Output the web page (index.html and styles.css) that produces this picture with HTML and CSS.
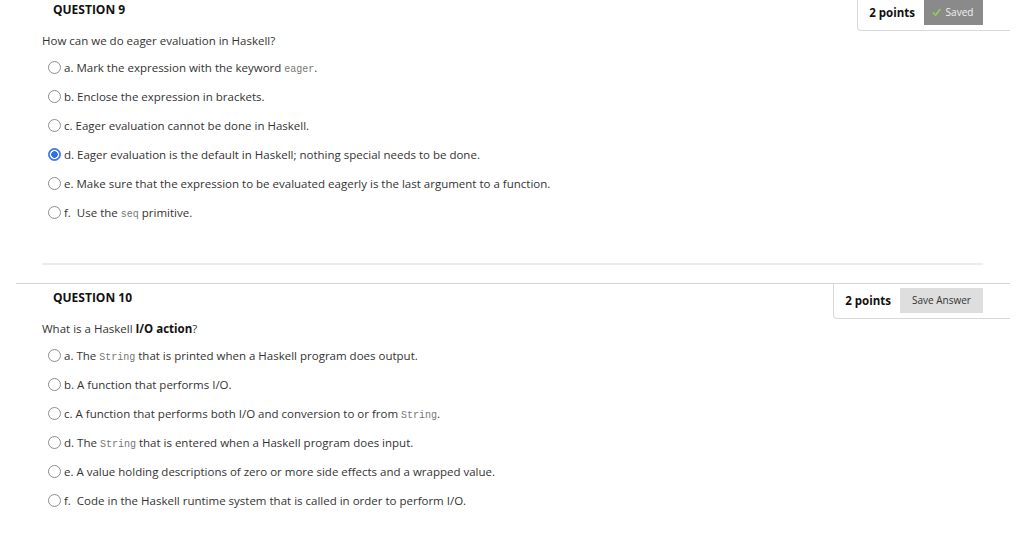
FILE: index.html
```html
<!DOCTYPE html>
<html lang="en">
<head>
<meta charset="utf-8">
<title>Quiz</title>
<link rel="stylesheet" href="styles.css">
</head>
<body>
<div class="quiz">
  <section class="question first">
    <div class="q-head">
      <h2 class="q-title">QUESTION 9</h2>
      <div class="points-box">
        <span class="points">2 points</span>
        <span class="btn saved"><svg class="check" viewBox="0 0 10 10" width="9" height="9"><path d="M1.5 5.5 L4 8 L8.8 1.8" fill="none" stroke="#8fd14f" stroke-width="1.8" stroke-linecap="round" stroke-linejoin="round"/></svg>Saved</span>
      </div>
    </div>
    <p class="q-text">How can we do eager evaluation in Haskell?</p>
    <ul class="options">
      <li class="opt"><span class="radio"></span><span>a. Mark the expression with the keyword <code>eager</code>.</span></li>
      <li class="opt"><span class="radio"></span><span>b. Enclose the expression in brackets.</span></li>
      <li class="opt"><span class="radio"></span><span>c. Eager evaluation cannot be done in Haskell.</span></li>
      <li class="opt"><span class="radio checked"></span><span>d. Eager evaluation is the default in Haskell; nothing special needs to be done.</span></li>
      <li class="opt"><span class="radio"></span><span>e. Make sure that the expression to be evaluated eagerly is the last argument to a function.</span></li>
      <li class="opt"><span class="radio"></span><span>f.&nbsp; Use the <code>seq</code> primitive.</span></li>
    </ul>
    <hr class="sep">
  </section>
  <section class="question">
    <div class="q-head">
      <h2 class="q-title">QUESTION 10</h2>
      <div class="points-box">
        <span class="points">2 points</span>
        <span class="btn save">Save Answer</span>
      </div>
    </div>
    <p class="q-text">What is a Haskell <b>I/O action</b>?</p>
    <ul class="options">
      <li class="opt"><span class="radio"></span><span>a. The <code>String</code> that is printed when a Haskell program does output.</span></li>
      <li class="opt"><span class="radio"></span><span>b. A function that performs I/O.</span></li>
      <li class="opt"><span class="radio"></span><span>c. A function that performs both I/O and conversion to or from <code>String</code>.</span></li>
      <li class="opt"><span class="radio"></span><span>d. The <code>String</code> that is entered when a Haskell program does input.</span></li>
      <li class="opt"><span class="radio"></span><span>e. A value holding descriptions of zero or more side effects and a wrapped value.</span></li>
      <li class="opt"><span class="radio"></span><span>f.&nbsp; Code in the Haskell runtime system that is called in order to perform I/O.</span></li>
    </ul>
  </section>
</div>
</body>
</html>
```

FILE: styles.css
```css
html, body {
  margin: 0;
  padding: 0;
  background: #fff;
}
body {
  font-family: "Open Sans", "Liberation Sans", sans-serif;
  color: #222;
  overflow: hidden;
}
.quiz {
  width: 994px;
  margin-left: 16px;
}
.question {
  border-top: 1px solid #d4d4d4;
}
.question.first {
  margin-top: -5px;
  padding-bottom: 18px;
}
.q-head {
  display: flex;
  justify-content: space-between;
  align-items: flex-start;
  height: 35px;
}
.q-title {
  margin: 0;
  padding: 6px 0 0 37px;
  font-size: 12px;
  line-height: 16px;
  font-weight: 700;
  color: #111;
}
.points-box {
  display: flex;
  align-items: center;
  gap: 9px;
  height: 35px;
  box-sizing: border-box;
  padding: 4px 27px 6px 11px;
  border-left: 1px solid #d8d8d8;
  border-bottom: 1px solid #d8d8d8;
  border-bottom-left-radius: 4px;
}
.points {
  font-size: 11.5px;
  font-weight: 700;
  color: #111;
}
.btn {
  display: flex;
  align-items: center;
  justify-content: center;
  height: 25px;
  font-size: 10px;
  box-sizing: border-box;
}
.btn.saved {
  width: 59px;
  background: #8a8a8a;
  color: #f2f2f2;
  gap: 5px;
  padding-right: 2px;
}
.btn.save {
  width: 83px;
  background: #dedede;
  color: #333;
}
.check {
  display: block;
}
.q-text {
  margin: 2px 0 0 26px;
  font-size: 11.5px;
  line-height: 16px;
  color: #333;
}
.q-text b {
  color: #111;
}
.options {
  list-style: none;
  margin: 4px 0 0 31px;
  padding: 0;
}
.opt {
  display: flex;
  align-items: center;
  gap: 3px;
  height: 29px;
  font-size: 11.5px;
  color: #333;
}
.radio {
  width: 13px;
  height: 13px;
  margin-left: 1px;
  box-sizing: border-box;
  border: 1px solid #8e8e8e;
  border-radius: 50%;
  background: #fff;
  flex: none;
}
.radio.checked {
  border: 1px solid #2f6fe8;
  background: radial-gradient(circle, #2f6fe8 0 3px, #ffffff 3.6px 4.2px, #4d86f0 4.8px);
}
code {
  font-family: "Liberation Mono", "DejaVu Sans Mono", monospace;
  font-size: 10px;
  color: #777;
}
.sep {
  border: 0;
  height: 2px;
  background: #ececec;
  margin: 36px 27px 0 26px;
}
```
